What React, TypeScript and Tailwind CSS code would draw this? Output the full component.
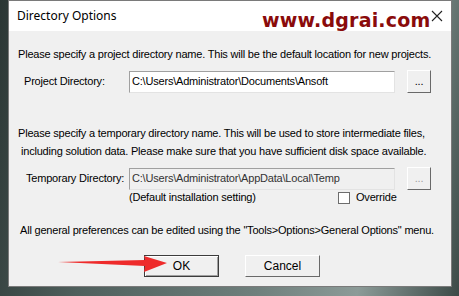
import { FC } from "react";

const ui = { fontFamily: '"Liberation Sans", Arial, sans-serif' };

const Input: FC<{ value: string; disabled?: boolean }> = ({ value, disabled }) => (
  <div
    className={`flex h-[22px] w-[266px] shrink-0 items-center whitespace-nowrap border border-t-[#a0a0a0] border-l-[#a0a0a0] border-r-[#e3e3e3] border-b-[#e3e3e3] px-[2px] ${
      disabled ? "bg-[#f0f0f0] text-[#333]" : "bg-white text-black"
    }`}
  >
    {value}
  </div>
);

const DotsButton: FC<{ disabled?: boolean }> = ({ disabled }) => (
  <div
    className={`ml-[12px] flex h-[23px] w-[24px] shrink-0 items-end justify-center border border-b-[#696969] border-r-[#696969] border-t-white border-l-white bg-[#f0f0f0] pb-[5px] leading-none ${
      disabled ? "text-[#a0a0a0]" : "text-black"
    }`}
  >
    ...
  </div>
);

const PushButton: FC<{ label: string; isDefault?: boolean }> = ({ label, isDefault }) => (
  <div
    className={`flex h-[22px] w-[75px] items-center justify-center bg-[#f0f0f0] text-[12px] ${
      isDefault
        ? "border border-[#3c3c3c] shadow-[inset_1px_1px_0_#fff,inset_-1px_-1px_0_#a0a0a0]"
        : "border border-t-white border-l-white border-r-[#696969] border-b-[#696969]"
    }`}
  >
    {label}
  </div>
);

export default function App() {
  return (
    <div className="relative h-[296px] w-[459px] overflow-hidden bg-[linear-gradient(100deg,#2b3634_0%,#4f5f5c_25%,#6f7f7c_60%,#8c9b98_80%,#3c4a47_100%)]">
      <div
        className="ml-[8px] flex h-[287px] w-[444px] flex-col whitespace-nowrap border border-[#7a7a7a] bg-[#f0f0f0] text-[11px] tracking-[-0.2px] text-black"
        style={ui}
      >
        <div className="relative flex h-[30px] shrink-0 items-center bg-white pl-[8px] tracking-normal">
          <span className="text-[12px] text-black" style={{ fontFamily: '"Noto Sans", "Open Sans", sans-serif' }}>
            Directory Options
          </span>
          <span
            className="absolute left-[253px] top-[10px] text-[19px] font-bold leading-none tracking-[0.2px] text-[#8a0b0b]"
            style={{ fontFamily: '"DejaVu Sans", Verdana, sans-serif' }}
          >
            www.dgrai.com
          </span>
          <svg className="absolute left-[422px] top-[9px]" width="12" height="12" viewBox="0 0 12 12">
            <path d="M1 1 L11 11 M11 1 L1 11" stroke="#222" strokeWidth="1.1" />
          </svg>
        </div>

        <div className="flex flex-col leading-[13px]">
          <p className="ml-[9px] mt-[17px]">
            Please specify a project directory name. This will be the default location for new projects.
          </p>
          <div className="mt-[9px] flex items-center">
            <span className="w-[120px] shrink-0 pl-[15px]">Project Directory:</span>
            <Input value="C:\Users\Administrator\Documents\Ansoft" />
            <DotsButton />
          </div>

          <p className="ml-[9px] mt-[31px] leading-[18px]">
            Please specify a temporary directory name. This will be used to store intermediate files,
            <br />
            <span className="ml-[3px]">including solution data. Please make sure that you have sufficient disk space available.</span>
          </p>
          <div className="mt-[7px] flex items-center">
            <span className="w-[120px] shrink-0 pl-[17px]">Temporary Directory:</span>
            <Input value="C:\Users\Administrator\AppData\Local\Temp" disabled />
            <DotsButton disabled />
          </div>
          <div className="mt-[1px] flex items-center pl-[120px]">
            <span className="w-[209px]">(Default installation setting)</span>
            <span className="h-[12px] w-[12px] border border-[#6d6d6d] bg-white" />
            <span className="ml-[6px]">Override</span>
          </div>

          <p className="ml-[11px] mt-[20px]">
            All general preferences can be edited using the "Tools&gt;Options&gt;General Options" menu.
          </p>

          <div className="mt-[18px] flex pl-[135px] tracking-normal">
            <PushButton label="OK" isDefault />
            <div className="w-[26px]" />
            <PushButton label="Cancel" />
          </div>
        </div>
      </div>

      <svg className="absolute left-[55px] top-[252px]" width="115" height="22" viewBox="0 0 115 22">
        <path d="M3 10 L90 8 L89 4 L112 11 L89 20 L90 14 Z" fill="#ee2b2b" />
      </svg>
    </div>
  );
}
